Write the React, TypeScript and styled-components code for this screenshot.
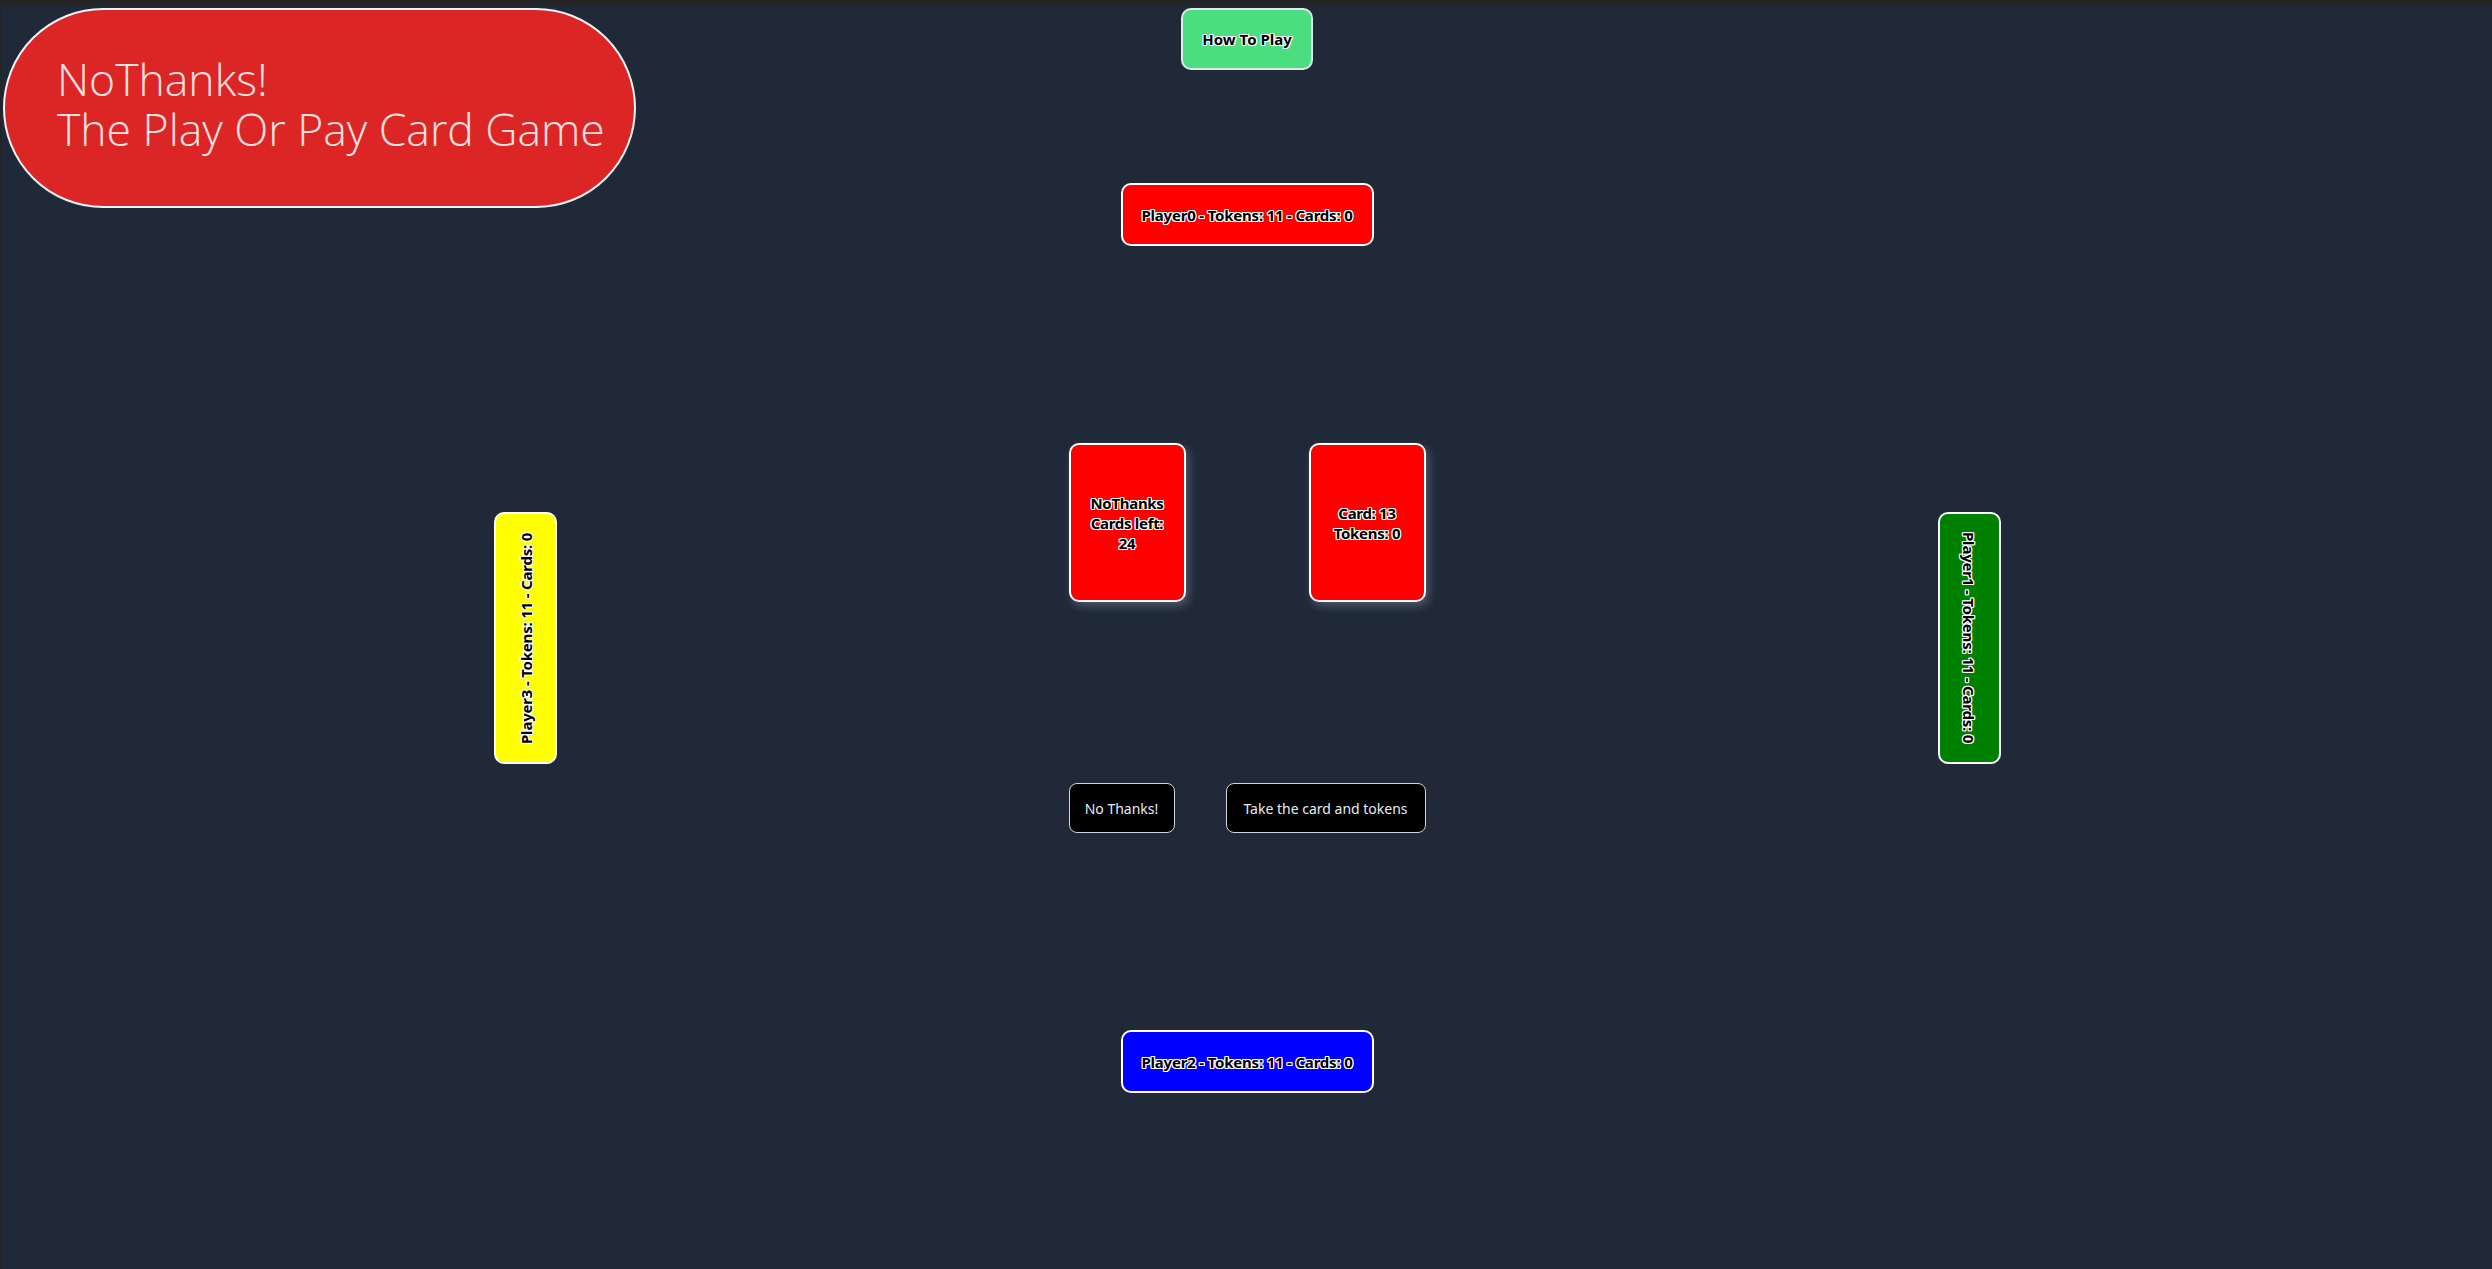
import React from "react";
import styled, { createGlobalStyle, css } from "styled-components";

const Global = createGlobalStyle`
  html, body {
    margin: 0;
    padding: 0;
    background: #252528;
    font-family: "Noto Sans", "Open Sans", "DejaVu Sans", sans-serif;
  }
  body { overflow: hidden; }
`;

const outline = css`
  color: #000;
  text-shadow: 1px 1px 0 #fff, -1px -1px 0 #fff, 1px -1px 0 #fff, -1px 1px 0 #fff,
    0 1px 0 #fff, 0 -1px 0 #fff, 1px 0 0 #fff, -1px 0 0 #fff;
`;

const Frame = styled.div`
  position: relative;
  margin: 6px 0 0 2px;
  height: calc(100vh - 6px);
  background: #1f2937;
  display: flex;
  flex-direction: column;
  align-items: center;
`;

const Title = styled.h1`
  position: absolute;
  top: 2px;
  left: 1px;
  margin: 0;
  box-sizing: border-box;
  width: 633px;
  height: 200px;
  padding: 44px 0 0 52px;
  background: #dc2626;
  border: 2px solid #f3f4f6;
  border-radius: 100px;
  color: #fee2e2;
  font-family: "Open Sans", "Noto Sans", sans-serif;
  font-weight: 300;
  font-size: 44.5px;
  line-height: 50px;
  letter-spacing: 0;
`;

const TitleLine = styled.span`
  display: block;
`;

const HowTo = styled.button`
  margin-top: 2px;
  box-sizing: border-box;
  width: 132px;
  height: 62px;
  background: #4ade80;
  border: 2px solid #e5e7eb;
  border-radius: 10px;
  font-family: "Noto Sans", sans-serif;
  font-weight: 700;
  font-size: 15px;
  ${outline}
  cursor: pointer;
`;

const PlayerBox = styled.div<{ $bg: string; $orient?: "up" | "down" | "none"; $mt?: number }>`
  box-sizing: border-box;
  display: flex;
  align-items: center;
  justify-content: center;
  margin-top: ${(p) => p.$mt ?? 0}px;
  background: ${(p) => p.$bg};
  border: 2px solid #fff;
  border-radius: 10px;
  font-family: "Noto Sans", sans-serif;
  font-weight: 700;
  font-size: 15px;
  letter-spacing: -0.2px;
  white-space: nowrap;
  ${outline}
  ${(p) =>
    p.$orient === "up"
      ? css`
          width: 63px;
          height: 252px;
          writing-mode: vertical-rl;
          transform: rotate(180deg);
        `
      : p.$orient === "down"
      ? css`
          width: 63px;
          height: 252px;
          writing-mode: vertical-rl;
        `
      : css`
          width: 253px;
          height: 63px;
        `}
`;

const MiddleRow = styled.div`
  margin-top: 197px;
  display: flex;
  align-items: center;
  gap: 512px;
`;

const Center = styled.div`
  width: 357px;
  display: flex;
  flex-direction: column;
  gap: 181px;
`;

const CardRow = styled.div`
  display: flex;
  justify-content: space-between;
`;

const Card = styled.div`
  box-sizing: border-box;
  width: 117px;
  height: 159px;
  display: flex;
  align-items: center;
  justify-content: center;
  text-align: center;
  padding: 0 12px;
  background: #ff0000;
  border: 2px solid #fff;
  border-radius: 10px;
  box-shadow: 3px 4px 10px rgba(190, 200, 220, 0.3);
  font-family: "Noto Sans", sans-serif;
  font-weight: 700;
  font-size: 15px;
  line-height: 20px;
  letter-spacing: -0.3px;
  ${outline}
`;

const ActionRow = styled.div`
  display: flex;
  justify-content: space-between;
`;

const ActionButton = styled.button<{ $w: number }>`
  box-sizing: border-box;
  width: ${(p) => p.$w}px;
  height: 50px;
  background: #000;
  color: #e5ecf4;
  border: 1px solid #d1d5db;
  border-radius: 8px;
  font-family: "Noto Sans", sans-serif;
  font-size: 14px;
  cursor: pointer;
`;

export default function App() {
  return (
    <>
      <Global />
      <Frame>
        <Title>
          <TitleLine>NoThanks!</TitleLine>
          <TitleLine>The Play Or Pay Card Game</TitleLine>
        </Title>
        <HowTo>How To Play</HowTo>
        <PlayerBox $bg="#ff0000" $mt={113}>
          Player0 - Tokens: 11 - Cards: 0
        </PlayerBox>
        <MiddleRow>
          <PlayerBox $bg="#ffff00" $orient="up">
            Player3 - Tokens: 11 - Cards: 0
          </PlayerBox>
          <Center>
            <CardRow>
              <Card>NoThanks Cards left: 24</Card>
              <Card>
                Card: 13
                <br />
                Tokens: 0
              </Card>
            </CardRow>
            <ActionRow>
              <ActionButton $w={106}>No Thanks!</ActionButton>
              <ActionButton $w={200}>Take the card and tokens</ActionButton>
            </ActionRow>
          </Center>
          <PlayerBox $bg="#008000" $orient="down">
            Player1 - Tokens: 11 - Cards: 0
          </PlayerBox>
        </MiddleRow>
        <PlayerBox $bg="#0000ff" $mt={197}>
          Player2 - Tokens: 11 - Cards: 0
        </PlayerBox>
      </Frame>
    </>
  );
}
